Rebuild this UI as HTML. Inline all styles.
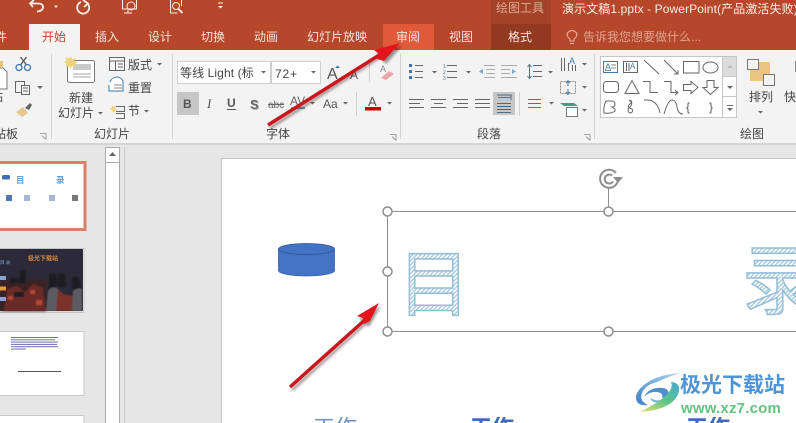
<!DOCTYPE html>
<html lang="zh"><head><meta charset="utf-8"><title>PowerPoint</title>
<style>
html,body{margin:0;padding:0;width:796px;height:423px;overflow:hidden;background:#e6e6e6}
body{position:relative}
svg{display:block}
text{font-family:"Liberation Sans","Noto Sans CJK SC",sans-serif}
.r{font-size:12px;fill:#444}
.t{font-size:12px;fill:#f6e3dc}
.ic{fill:none;stroke:#666;stroke-width:1}
.b{position:absolute;top:417px;height:6px;width:50px;overflow:hidden;font:22px/22px "Liberation Sans","Noto Sans CJK SC",sans-serif;color:#3f6cb5}
</style></head><body>
<svg width="796" height="423" viewBox="0 0 796 423" xmlns="http://www.w3.org/2000/svg">
<defs>
<pattern id="h" width="3" height="3" patternUnits="userSpaceOnUse" patternTransform="rotate(45)"><rect width="3" height="3" fill="#fff"/><rect width="1.4" height="3" fill="#a9cbdf"/></pattern>
<linearGradient id="sw" x1="1" y1="0" x2="0" y2="1"><stop offset="0" stop-color="#4aa8d8"/><stop offset=".45" stop-color="#58c48a"/><stop offset="1" stop-color="#e6dc68"/></linearGradient>
<linearGradient id="sb" x1="1" y1="0" x2="0" y2="1"><stop offset="0" stop-color="#a8d4f0"/><stop offset="1" stop-color="#3f80c8"/></linearGradient>
<filter id="sd" x="-20%" y="-20%" width="140%" height="140%"><feGaussianBlur stdDeviation="1.2"/></filter>
<filter id="bl"><feGaussianBlur stdDeviation=".6"/></filter>
</defs>
<!-- title bar -->
<rect width="796" height="50" fill="#b7472a"/>
<rect x="491" y="0" width="60" height="24" fill="#a5432a"/>
<rect x="491" y="24" width="60" height="26" fill="#93391f"/>
<rect x="383" y="24" width="51" height="26" fill="#e05a3a"/>
<rect x="29" y="24" width="51" height="26" fill="#f3f3f3"/>
<!-- QAT -->
<g fill="none" stroke="#fbeee9" stroke-width="1.8">
<path d="M33 7 L30 3.500 L34 0 M30.500 3.500 H38 Q43 3.500 43 7 Q43 11 37 11.500"/>
<path d="M54 5.500h4l-2 2.500z" stroke="none" fill="#fbeee9"/>
<path d="M81 2 A6 6 0 1 0 88 4 M83 0 L88 3.500 L84 7"/>
<g stroke-width="1"><path d="M122.500 0v9h14v-9"/><circle cx="131" cy="6" r="4"/><path d="M124 13h8M128 10v3"/></g>
<g stroke-width="1"><path d="M170.500 0v13h7M181.500 0v6"/><circle cx="176" cy="6" r="3.500"/><path d="M178.500 9l4 4" stroke-width="1.800"/></g>
<path d="M218 3h5" stroke-width="1"/>
<path d="M218 6h5l-2.500 2.500z" stroke="none" fill="#fbeee9"/>
</g>
<text x="496" y="12" font-size="12" fill="#dfa893">绘图工具</text>
<text x="562" y="13" font-size="12" fill="#fbeee9" letter-spacing=".1">演示文稿1.pptx - PowerPoint(产品激活失败)</text>
<!-- tabs -->
<text x="-17" y="41" class="t">文件</text>
<text x="42" y="41" font-size="12" fill="#b7472a">开始</text>
<text x="95" y="41" class="t">插入</text>
<text x="148" y="41" class="t">设计</text>
<text x="201" y="41" class="t">切换</text>
<text x="254" y="41" class="t">动画</text>
<text x="307" y="41" class="t">幻灯片放映</text>
<text x="396" y="41" class="t">审阅</text>
<text x="449" y="41" class="t">视图</text>
<text x="508" y="41" class="t">格式</text>
<g fill="none" stroke="#e7b9a8" stroke-width="1"><path d="M570 41 V39 Q566 36 567.500 33 Q572 28 576.500 33 Q578 36 574 39 V41z M570 43.500h4"/></g>
<text x="583" y="41" font-size="12" fill="#e0a48f">告诉我您想要做什么...</text>
<!-- ribbon -->
<rect y="50" width="796" height="93" fill="#f3f3f3"/>
<rect y="143" width="796" height="2" fill="#d4d4d4"/>
<g fill="#d2d2d2"><rect x="51" y="54" width="1" height="85"/><rect x="172" y="54" width="1" height="85"/><rect x="400" y="54" width="1" height="85"/><rect x="594" y="54" width="1" height="85"/></g>
<!-- clipboard -->
<path d="M-1 68h4l4 4v17h-8z" fill="#fff" stroke="#777"/><rect x="0" y="61" width="3" height="6" fill="#e8c47a"/>
<text x="-21" y="101" class="r">粘贴</text>
<g fill="none" stroke="#3f78ae" stroke-width="1.300"><circle cx="19" cy="67.500" r="3"/><circle cx="27.500" cy="67.500" r="3"/><path d="M20.500 65l6-8M26.500 65l-6-8" stroke="#555"/></g>
<g class="ic"><rect x="15.500" y="81.500" width="9" height="11"/><rect x="21.500" y="85.500" width="8" height="9" fill="#f3f3f3"/><path d="M23 88h5M23 91h5"/></g>
<path d="M37 86h6l-3 3z" fill="#666"/>
<path d="M16 112l7-5 5 6-6 4z" fill="#e4c98e"/><path d="M25 108l5-5 2 2-3 5z" fill="#666"/>
<text x="-6" y="138" class="r">贴板</text>
<path d="M40 133.500h6v6M42 135.500l4 4" fill="none" stroke="#888" stroke-width=".8"/>
<!-- slides group -->
<rect x="67.500" y="60.500" width="27" height="22" rx="2" fill="#fff" stroke="#777"/><rect x="73" y="64" width="18" height="6" fill="#c9c9c9"/><path d="M73 74h18M73 77h18" stroke="#aaa"/>
<path d="M71 56l1.500 3.500 3.500-2-1.500 3.500 3.500 1.500-3.500 1.500 1 3.500-3.500-1.500-1.500 3-1.500-3-3.500 1 1-3.500-3-1.500 3-1.500-1-3.500 3.500 1.500z" fill="#f0d27e"/>
<text x="69" y="102" class="r">新建</text><text x="58" y="117" class="r">幻灯片</text>
<path d="M98 112h5l-2.500 2.500z" fill="#666"/>
<g class="ic"><rect x="109.500" y="57.500" width="15" height="13"/><path d="M110 61h14M115.500 61v9M118 64h5M118 67h5"/></g>
<text x="128" y="69" class="r">版式</text><path d="M157 63h5l-2.500 2.500z" fill="#666"/>
<path d="M110 82a7 7 0 0 1 13-1v10h-14v-6" fill="#fff" stroke="#3f78ae"/><path d="M114 85h8M114 88h8" stroke="#888"/>
<text x="128" y="92" class="r">重置</text>
<path d="M112 104l1 3 3-1-1 3 3 1-3 1-2 2-1-3-3-1 3-1z" fill="#f0d27e"/>
<path d="M116 106.500h8.500v5h-8.500M116 113.500h8.500v5h-8.500" fill="none" stroke="#666"/>
<text x="128" y="115" class="r">节</text><path d="M144 110h5l-2.500 2.500z" fill="#666"/>
<text x="94" y="138" class="r">幻灯片</text>
<!-- font group -->
<rect x="177.500" y="61.500" width="93" height="22" fill="#fff" stroke="#cfcfcf"/>
<rect x="271.500" y="61.500" width="49" height="22" fill="#fff" stroke="#cfcfcf"/>
<text x="180" y="77" font-size="12" fill="#444" letter-spacing=".1">等线 Light (标</text>
<path d="M261 71h5l-2.500 2.500zM311 71h5l-2.500 2.500z" fill="#666"/>
<text x="275" y="78" font-size="12" fill="#444" letter-spacing=".8">72+</text>
<text x="327" y="79" font-size="16" fill="#555">A</text><path d="M335 68l2.500-2.500 2.500 2.500z" fill="#3f78ae"/>
<text x="350" y="79" font-size="12" fill="#555">A</text>
<rect x="369" y="58" width="1" height="24" fill="#d2d2d2"/>
<text x="380" y="72" font-size="9" fill="#888">A</text><path d="M381 78l8-7 5 3-8 6z" fill="#e9a6a6"/>
<rect x="177" y="92" width="22" height="23" fill="#c6c6c6"/>
<text x="183" y="108" font-size="12" font-weight="bold" fill="#555">B</text>
<text x="207" y="108" font-size="13" font-style="italic" style="font-family:'Liberation Serif',serif" fill="#555">I</text>
<text x="227" y="107" font-size="12" font-weight="bold" fill="#555">U</text><rect x="227" y="109" width="9" height="1" fill="#555"/>
<text x="251" y="110" font-size="13" font-weight="bold" fill="#bbb">S</text>
<text x="250" y="109" font-size="13" font-weight="bold" fill="#666">S</text>
<text x="268" y="108" font-size="10" fill="#666">abc</text><rect x="268" y="104" width="16" height="1" fill="#666"/>
<text x="290" y="105" font-size="12" fill="#666">AV</text><path d="M291 108h14" stroke="#3f78ae" stroke-width="1.500"/>
<path d="M310 102h5l-2.500 2.500z" fill="#666"/>
<text x="323" y="108" font-size="12" fill="#555">Aa</text><path d="M343 102h5l-2.500 2.500z" fill="#666"/>
<rect x="356" y="92" width="1" height="24" fill="#d2d2d2"/>
<text x="368" y="106" font-size="13" fill="#555">A</text><rect x="365" y="107" width="16" height="3.500" fill="#c00"/>
<path d="M387 102h5l-2.500 2.500z" fill="#666"/>
<text x="266" y="138" class="r">字体</text>
<path d="M390 134.500h6v6M392 136.500l4 4" fill="none" stroke="#888" stroke-width=".8"/>
<!-- paragraph group -->
<g stroke="#666" fill="none">
<path d="M415 65.500h8M415 71.500h8M415 77.500h8M447 65.500h10M447 71.500h10M447 77.500h10"/>
<g stroke="#aaa"><path d="M484 65.500h11M486 69.500h9M486 73.500h9M484 77.500h11M501 65.500h16M501 69.500h9M501 73.500h9M501 77.500h16"/></g>
<path d="M533 65.500h9M533 71.500h9M533 76.500h9"/><path d="M529.500 65v13M527.500 67l2-2.500 2 2.500M527.500 76l2 2.500 2-2.500" stroke="#3f78ae"/>
<path d="M409 99.500h15M409 103.500h11M409 107.500h15M431 99.500h15M434 103.500h9M431 107.500h15M453 99.500h15M457 103.500h11M453 107.500h15M475 99.500h15M475 103.500h15M475 107.500h15"/>
</g>
<path d="M409 64h3v3h-3zM409 70h3v3h-3zM409 76h3v3h-3z" fill="#3f78ae"/>
<text x="443" y="68" font-size="5" fill="#3f78ae">1</text><text x="443" y="74" font-size="5" fill="#3f78ae">2</text><text x="443" y="80" font-size="5" fill="#3f78ae">3</text>
<path d="M432 71h5l-2.500 2.500zM466 71h5l-2.500 2.500zM548 71h5l-2.500 2.500z" fill="#666"/>
<path d="M479 71.500l4-2.500v5zM516 71.500l-4-2.500v5z" fill="#7ea6c8"/>
<rect x="493" y="92" width="22" height="23" fill="#c6c6c6"/>
<path d="M497 95h14v5M497 103.500h14M497 106.500h14M497 109.500h14M497 112.500h14" stroke="#4b6a85" fill="none"/>
<path d="M498 97.500h12" stroke="#3f78ae"/>
<rect x="519" y="92" width="1" height="24" fill="#d2d2d2"/>
<path d="M528 99.500h13M528 103.500h13M528 107.500h13" stroke="#3f78ae"/>
<path d="M549 102h5l-2.500 2.500z" fill="#666"/>
<path d="M561.500 58v13M564.500 58v13M568.500 63v8M572.500 65v6M575.500 65v6" stroke="#666"/>
<text x="569" y="64" font-size="9" fill="#3f78ae">A</text>
<path d="M582 63h5l-2.500 2.500zM582 86h5l-2.500 2.500zM582 109h5l-2.500 2.500z" fill="#666"/>
<rect x="560.500" y="81.500" width="15" height="12" fill="none" stroke="#888" stroke-dasharray="2 1"/>
<path d="M568 80v6M568 89v6M566 83l2-2 2 2M566 92l2 2 2-2" stroke="#3f78ae" fill="none"/>
<path d="M560 103h14l4 3h-14z" fill="#3f9f84"/><rect x="566.500" y="107.500" width="11" height="9" fill="#fff" stroke="#777"/>
<text x="477" y="138" class="r">段落</text>
<path d="M584 134.500h6v6M586 136.500l4 4" fill="none" stroke="#888" stroke-width=".8"/>
<!-- gallery -->
<rect x="600.500" y="56.500" width="122" height="61" fill="#fff" stroke="#c6c6c6"/>
<rect x="722.500" y="56.500" width="14" height="20" fill="#dcdcdc" stroke="#c6c6c6"/>
<rect x="722.500" y="76.500" width="14" height="20" fill="#fff" stroke="#c6c6c6"/>
<rect x="722.500" y="96.500" width="14" height="21" fill="#fff" stroke="#c6c6c6"/>
<path d="M727 68l3-3 3 3z" fill="#bbb"/><path d="M727 86h6l-3 3z" fill="#666"/><path d="M727 105.500h6" stroke="#666"/><path d="M727 108h6l-3 3z" fill="#666"/>
<g fill="none" stroke="#666" stroke-width="1">
<rect x="603.500" y="61.500" width="14" height="11" stroke="#3f78ae"/><path d="M611 65h5M611 68h5M605 70.500h6" stroke="#888"/>
<rect x="623.500" y="61.500" width="14" height="11"/><path d="M626.500 63v8M629 63v8"/>
<path d="M644 60l15 14M664 60l14 14M674 74h4v-4"/>
<rect x="683.500" y="61.500" width="15.500" height="11.500"/>
<ellipse cx="710.500" cy="67.500" rx="7.500" ry="5.500"/>
<rect x="603.500" y="81.500" width="15" height="11" rx="3"/>
<path d="M632 80.500l-7 13h14z"/>
<path d="M643 81.500h7v11h8M664 81.500h7v11h7M675 90l3 2.500-3 2.500"/>
<path d="M683.500 84.500h7.500v-3l7 6-7 6v-3h-7.500z"/>
<path d="M707 80.500h7v7h4l-7.500 7-7.500-7h4z"/>
<path d="M606 101h5q4 0 4 3t-3 3l3 2v2q-4 3-11 2-1-6 2-12z"/>
<path d="M629 100q5 1 1 4t2 5q2 3-2 4-4-2 0-6t-1-7"/>
<path d="M644 100h5q9 2 11 13M664 114q4-14 8-14t5 7 6 7"/>
</g>
<text x="686" y="111" font-size="12" fill="#555">{</text>
<text x="709" y="111" font-size="12" fill="#555">}</text>
<text x="605" y="70" font-size="9" fill="#3f78ae">A</text>
<text x="630" y="69" font-size="8" fill="#3f78ae">A</text>
<!-- arrange -->
<rect x="757" y="62" width="13" height="12" fill="#ebc57f"/><rect x="750" y="69" width="13" height="12" fill="#ebc57f"/>
<rect x="747.500" y="59.500" width="11" height="10" fill="#f3f3f3" stroke="#777"/>
<rect x="763.500" y="74.500" width="11" height="11" fill="#f3f3f3" stroke="#777"/>
<text x="749" y="101" class="r">排列</text>
<text x="784" y="101" class="r">快</text>
<path d="M758 111h5l-2.500 2.500z" fill="#666"/>
<rect x="795" y="61" width="1" height="11" fill="#888"/>
<text x="740" y="138" class="r">绘图</text>
<!-- thumbnail panel -->
<rect y="145" width="796" height="278" fill="#e6e6e6"/>
<rect x="-4" y="162.500" width="89" height="67" fill="#fff" stroke="#da7f68" stroke-width="3"/>
<rect x="2" y="175" width="8" height="4.500" rx="1.500" fill="#3f6cb5"/>
<text x="16" y="183" font-size="8.500" font-weight="bold" fill="#6a9ecb">目</text><text x="56" y="183" font-size="8.500" font-weight="bold" fill="#6a9ecb">录</text>
<rect x="6" y="195" width="6" height="6" fill="#4f76b8"/><rect x="24" y="195" width="6" height="6" fill="#a6b4d6"/><rect x="49" y="195" width="6" height="6" fill="#a6b4d6"/><rect x="72" y="195" width="6" height="6" fill="#777"/>
<rect x="-2" y="248.500" width="86" height="64" fill="#fff" stroke="#c4c4c4"/>
<rect x="0" y="249" width="83" height="62" fill="#2c2a38"/>
<rect x="0" y="280" width="46" height="31" fill="#3a2224" filter="url(#sd)"/>
<g filter="url(#bl)">
<path d="M4 311l3-22 10-3 8 6 8-8 10 4 3 23z" fill="#6b2a26"/>
<path d="M47 311l2-20 8-3 6 6 10 2 10 15z" fill="#7a3329"/>
<path d="M49 275q4-4 7 0l2 10-9 4zM58 275q4-4 7 0l1 12-8 0zM72 278q5-3 7 0l2 10-9 2z" fill="#1f1c22"/>
<path d="M46 311l2-20q4-6 10-2l-2 22zM72 311l1-20q5-4 9-2v22z" fill="#5c5a62"/>
<path d="M10 278h16v5H10zM14 292h10v5H14zM20 270h6v8h-6z" fill="#1d1a20"/>
<path d="M30 290h5v4h-5zM36 300h6v5h-6zM8 296h5v4H8z" fill="#b5443a"/>
</g>
<text x="28" y="260.500" font-size="6" font-weight="bold" fill="#de8a3e">极光下载站</text>
<text x="0" y="264" font-size="4.500" fill="#7fa0dc">目 录</text>
<rect x="0" y="276" width="6" height="4" fill="#8aa6d8"/><rect x="0" y="286.500" width="6" height="4" fill="#e39a3f"/><rect x="0" y="297" width="6" height="4" fill="#8aa6d8"/>
<rect x="-2" y="331.500" width="86" height="64" fill="#fff" stroke="#c8c8c8"/>
<g fill="#6a70ac"><rect x="11" y="337" width="47" height="1"/><rect x="11" y="339.300" width="44" height="1"/><rect x="11" y="341.600" width="47" height="1"/><rect x="11" y="343.900" width="46" height="1"/><rect x="11" y="346.200" width="47" height="1"/><rect x="11" y="348.500" width="15" height="1"/></g>
<rect x="18" y="371" width="43" height="1" fill="#555"/>
<path d="M-1 423v-7.500h85v7.500" fill="#fff" stroke="#c8c8c8"/>
<!-- scrollbar -->
<path d="M105.500 423V147.500h14V423" fill="#fff" stroke="#ababab"/>
<path d="M105 162.500h15" stroke="#ababab"/>
<path d="M109 156l3.500-4 3.500 4z" fill="#666"/>
<rect x="124" y="147" width="1" height="276" fill="#cfcfcf"/>
<!-- slide -->
<path d="M796 158.500H221.500V423H796z" fill="#fff"/>
<path d="M796 158.500H221.500V423" fill="none" stroke="#c6c6c6"/>
<!-- cylinder -->
<path d="M278.500 249v21.500a28 5.500 0 0 0 56 0V249z" fill="#4472c4" stroke="#3a64ad" stroke-width=".8"/>
<ellipse cx="306.500" cy="249" rx="28" ry="5.500" fill="#4472c4" stroke="#2f5597" stroke-width=".8"/>
<!-- title text -->
<text x="398" y="310" font-size="72" style="font-family:'Noto Sans CJK SC',sans-serif" fill="url(#h)" stroke="#94bdd6" stroke-width="1.500">目</text>
<text x="742" y="308" font-size="76" style="font-family:'Noto Sans CJK SC',sans-serif" fill="url(#h)" stroke="#94bdd6" stroke-width="1.500">录</text>
<!-- selection -->
<path d="M796 211.500H387.500V331.500H796" fill="none" stroke="#8e8e8e"/>
<path d="M608.500 211v-23" stroke="#8e8e8e"/>
<g fill="#fff" stroke="#8e8e8e" stroke-width="1.500">
<circle cx="387.500" cy="211.500" r="4.500"/><circle cx="387.500" cy="271.500" r="4.500"/><circle cx="387.500" cy="331.500" r="4.500"/><circle cx="608.500" cy="211.500" r="4.500"/><circle cx="608.500" cy="331.500" r="4.500"/>
</g>
<g fill="none" stroke="#8e8e8e" stroke-width="2"><path d="M616 173a9 9 0 1 0 1.500 9"/><path d="M612 175.500a4.500 4.500 0 1 0 1 6"/></g>
<path d="M613 177h10l-5 6z" fill="#8e8e8e"/>
<!-- watermark -->
<rect x="634" y="370" width="156" height="46" fill="#fff" opacity=".85"/>
<path d="M680 373q-24 2-36 12t-6 18q4 3 10 2-9-4-6-12t15-11q13-6 23-9z" fill="url(#sb)"/>
<path d="M644 397q4-8 13-9t11 3-6 7q2-5-5-6t-13 5z" fill="#4a8fd0"/>
<path d="M650 398q8 4 13 1t4-5q3 6-6 8t-11-4z" fill="#7db8e0"/>
<path d="M640 412q22-2 31-9t8-16q-2-5-8-5 2 5-2 10t-13 11q-8 5-16 9z" fill="url(#sw)"/>
<text x="680" y="392" font-size="21" font-weight="bold" fill="#4f95d6">极光下载站</text>
<text x="681" y="413" font-size="15" font-weight="bold" fill="#63c27e" letter-spacing=".2">www.xz7.com</text>
<!-- red arrows -->
<g opacity=".4" filter="url(#sd)" transform="translate(2 3)">
<path d="M268 125L384 50" stroke="#300" stroke-width="3"/><path d="M400 43l-26 7 10 11z"/>
<path d="M290 387L365 319" stroke="#300" stroke-width="3"/><path d="M379 303l-22 13 10 8z"/>
</g>
<path d="M268 125L384 52" stroke="#c8161c" stroke-width="3.400" fill="none"/>
<path d="M400 43l-26 7 4 3-1 6 7 2z" fill="#e3141c"/>
<path d="M290 387L367 318" stroke="#c8161c" stroke-width="3.400" fill="none"/>
<path d="M379 303l-22 13 6 2 1 6 6-3z" fill="#e3141c"/>
</svg>
<div class="b" style="left:313px;color:#6f93c9">工作</div>
<div class="b" style="left:470px;font-weight:bold">工作</div>
<div class="b" style="left:686px;font-weight:bold">工作</div>
</body></html>
